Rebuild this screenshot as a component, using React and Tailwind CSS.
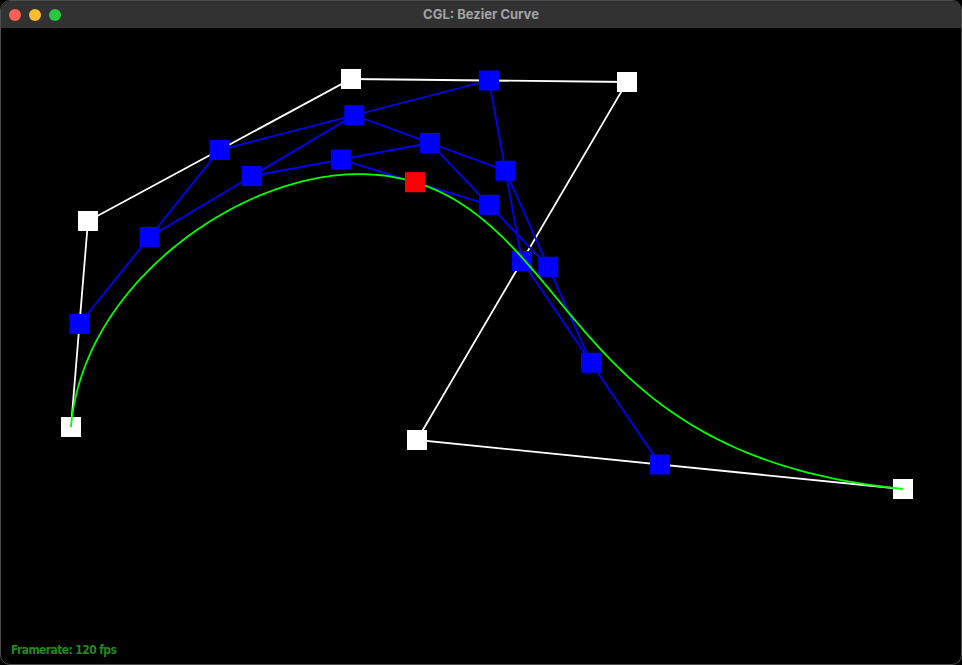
import React from "react";

const controlPoints = [
  [71, 427],
  [88, 221],
  [351, 79],
  [627, 82],
  [417, 440],
  [903, 489],
];

const T = 0.5;

const lerp = (a, b, t) => [a[0] + (b[0] - a[0]) * t, a[1] + (b[1] - a[1]) * t];

// every level of de Casteljau at parameter t
const levelsAt = (pts, t) => {
  const levels = [pts];
  let cur = pts;
  while (cur.length > 1) {
    const next = [];
    for (let i = 0; i < cur.length - 1; i++) next.push(lerp(cur[i], cur[i + 1], t));
    levels.push(next);
    cur = next;
  }
  return levels;
};

const evalCurve = (pts, t) => {
  const lv = levelsAt(pts, t);
  return lv[lv.length - 1][0];
};

const curvePoints = () => {
  const out = [];
  for (let i = 0; i <= 200; i++) {
    const p = evalCurve(controlPoints, i / 200);
    out.push(`${p[0].toFixed(2)},${p[1].toFixed(2)}`);
  }
  return out.join(" ");
};

const toPolyline = (pts) => pts.map((p) => `${p[0]},${p[1]}`).join(" ");

const Square = ({ p, fill }) => (
  <rect x={p[0] - 10} y={p[1] - 10} width="20" height="20" fill={fill} />
);

const BezierCanvas = () => {
  const levels = levelsAt(controlPoints, T);
  const inner = levels.slice(1, levels.length - 1);
  const final = levels[levels.length - 1][0];

  return (
    <svg className="block w-full h-full" viewBox="1 28 960 636" preserveAspectRatio="none">
      {/* control polygon */}
      <polyline points={toPolyline(controlPoints)} fill="none" stroke="#ffffff" strokeWidth="1.8" />
      {controlPoints.map((p, i) => (
        <Square key={`c${i}`} p={p} fill="#ffffff" />
      ))}

      {/* intermediate levels */}
      {inner.map((lv, i) =>
        lv.length > 1 ? (
          <polyline key={`l${i}`} points={toPolyline(lv)} fill="none" stroke="#0000ff" strokeWidth="1.8" />
        ) : null
      )}
      {inner.map((lv, i) => lv.map((p, j) => <Square key={`b${i}-${j}`} p={p} fill="#0000ff" />))}

      {/* the curve */}
      <polyline points={curvePoints()} fill="none" stroke="#00ff00" strokeWidth="1.8" />

      <Square p={final} fill="#ff0000" />
    </svg>
  );
};

const App = () => {
  return (
    <div className="w-[962px] h-[665px] bg-black">
      <div className="w-full h-full flex flex-col rounded-[10px] border border-[#4d4d4d] overflow-hidden bg-black">
        {/* title bar */}
        <div className="h-[27px] shrink-0 bg-[#323232] flex items-center relative">
          <div className="flex items-center gap-[8px] pl-[8px]">
            <span className="w-[12px] h-[12px] rounded-full bg-[#fe5f57]" />
            <span className="w-[12px] h-[12px] rounded-full bg-[#febc2e]" />
            <span className="w-[12px] h-[12px] rounded-full bg-[#28c840]" />
          </div>
          <div
            className="flex-1 text-center text-[13px] font-bold text-[#a3a3a3] pr-[60px]"
            style={{ fontFamily: '"Inter", "Liberation Sans", sans-serif' }}
          >
            CGL: Bezier Curve
          </div>
        </div>

        {/* canvas */}
        <div className="relative flex-1">
          <BezierCanvas />
          <div
            className="absolute left-[10px] bottom-[5px] text-[12px] font-bold text-[#21891f] tracking-[-0.6px]"
            style={{ fontFamily: '"DejaVu Sans Condensed", "DejaVu Sans", sans-serif', fontStretch: "condensed" }}
          >
            Framerate: 120 fps
          </div>
        </div>
      </div>
    </div>
  );
};

export default App;
